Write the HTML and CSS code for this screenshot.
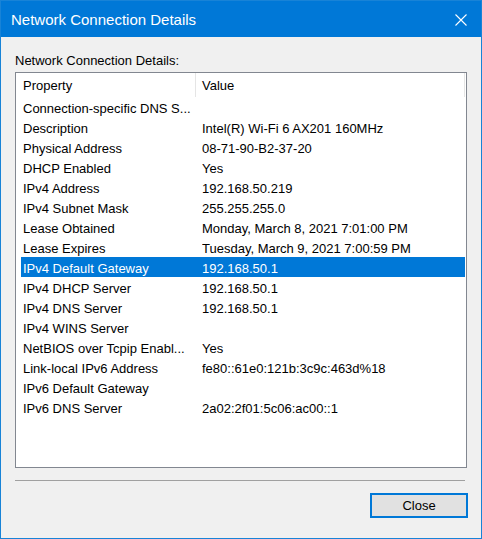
FILE: index.html
```html
<!DOCTYPE html>
<html>
<head>
<meta charset="utf-8">
<title>Network Connection Details</title>
<link rel="stylesheet" href="styles.css">
</head>
<body>
<div class="window">
  <div class="titlebar">
    <span class="title">Network Connection Details</span>
    <svg class="close-x" width="12" height="12" viewBox="0 0 12 12"><path d="M0.5 0.5 L11.5 11.5 M11.5 0.5 L0.5 11.5" stroke="#fff" stroke-width="1.1" fill="none"/></svg>
  </div>
  <div class="content">
    <div class="label">Network Connection Details:</div>
    <div class="listview">
      <div class="header">
        <div class="hcell prop">Property</div>
        <div class="hcell val">Value</div>
      </div>
      <div class="rows">
        <div class="row"><span class="c1">Connection-specific DNS S...</span><span class="c2"></span></div>
        <div class="row"><span class="c1">Description</span><span class="c2">Intel(R) Wi-Fi 6 AX201 160MHz</span></div>
        <div class="row"><span class="c1">Physical Address</span><span class="c2">08-71-90-B2-37-20</span></div>
        <div class="row"><span class="c1">DHCP Enabled</span><span class="c2">Yes</span></div>
        <div class="row"><span class="c1">IPv4 Address</span><span class="c2">192.168.50.219</span></div>
        <div class="row"><span class="c1">IPv4 Subnet Mask</span><span class="c2">255.255.255.0</span></div>
        <div class="row"><span class="c1">Lease Obtained</span><span class="c2">Monday, March 8, 2021 7:01:00 PM</span></div>
        <div class="row"><span class="c1">Lease Expires</span><span class="c2">Tuesday, March 9, 2021 7:00:59 PM</span></div>
        <div class="row selected"><span class="c1">IPv4 Default Gateway</span><span class="c2">192.168.50.1</span></div>
        <div class="row"><span class="c1">IPv4 DHCP Server</span><span class="c2">192.168.50.1</span></div>
        <div class="row"><span class="c1">IPv4 DNS Server</span><span class="c2">192.168.50.1</span></div>
        <div class="row"><span class="c1">IPv4 WINS Server</span><span class="c2"></span></div>
        <div class="row"><span class="c1">NetBIOS over Tcpip Enabl...</span><span class="c2">Yes</span></div>
        <div class="row"><span class="c1">Link-local IPv6 Address</span><span class="c2">fe80::61e0:121b:3c9c:463d%18</span></div>
        <div class="row"><span class="c1">IPv6 Default Gateway</span><span class="c2"></span></div>
        <div class="row"><span class="c1">IPv6 DNS Server</span><span class="c2">2a02:2f01:5c06:ac00::1</span></div>
      </div>
    </div>
    <div class="separator"></div>
    <div class="footer">
      <button class="btn">Close</button>
    </div>
  </div>
</div>
</body>
</html>
```

FILE: styles.css
```css
* { box-sizing: border-box; }
html, body { margin: 0; padding: 0; }
body {
  width: 482px;
  height: 539px;
  font-family: "Liberation Sans", Arial, sans-serif;
  font-size: 13px;
  color: #000;
  background: #f0f0f0;
}
.window {
  width: 482px;
  height: 539px;
  border: 1px solid #1883d7;
  background: #f0f0f0;
  display: flex;
  flex-direction: column;
}
.titlebar {
  height: 36px;
  background: #0078d7;
  display: flex;
  align-items: center;
  justify-content: space-between;
  padding: 0 14px 0 10px;
}
.title {
  color: #fff;
  font-size: 15px;
  line-height: 20px;
  padding-top: 2px;
}
.close-x { display: block; margin-top: 1px; }
.content {
  padding: 15px 13px 0 14px;
  display: flex;
  flex-direction: column;
}
.label {
  line-height: 16px;
  padding-top: 1px;
  margin-bottom: 4px;
  height: 16px;
}
.listview {
  width: 452px;
  height: 396px;
  border: 1px solid #828790;
  background: #fff;
}
.header {
  display: flex;
  height: 24px;
}
.hcell {
  line-height: 22px;
  padding-top: 2px;
  border-right: 1px solid #e5e5e5;
  white-space: nowrap;
}
.hcell.prop { width: 180px; padding-left: 7px; }
.hcell.val { width: 269px; padding-left: 6px; }
.rows {
  display: flex;
  flex-direction: column;
  padding-left: 5px;
}
.row {
  display: flex;
  width: 444px;
  height: 20px;
  line-height: 20px;
  padding-top: 2px;
  white-space: nowrap;
}
.row .c1 { width: 181px; padding-left: 2px; overflow: hidden; }
.row .c2 { flex: 1; overflow: hidden; }
.row.selected { background: #0078d7; color: #fff; }
.separator {
  width: 450px;
  height: 1px;
  background: #a0a0a0;
  margin-top: 12px;
}
.footer {
  display: flex;
  justify-content: flex-end;
  margin-top: 12px;
}
.btn {
  width: 98px;
  height: 25px;
  border: 2px solid #0078d7;
  background: #e1e1e1;
  font-family: "Liberation Sans", Arial, sans-serif;
  font-size: 13px;
  color: #000;
  padding: 0;
  margin: 0;
  border-radius: 0;
}
```
